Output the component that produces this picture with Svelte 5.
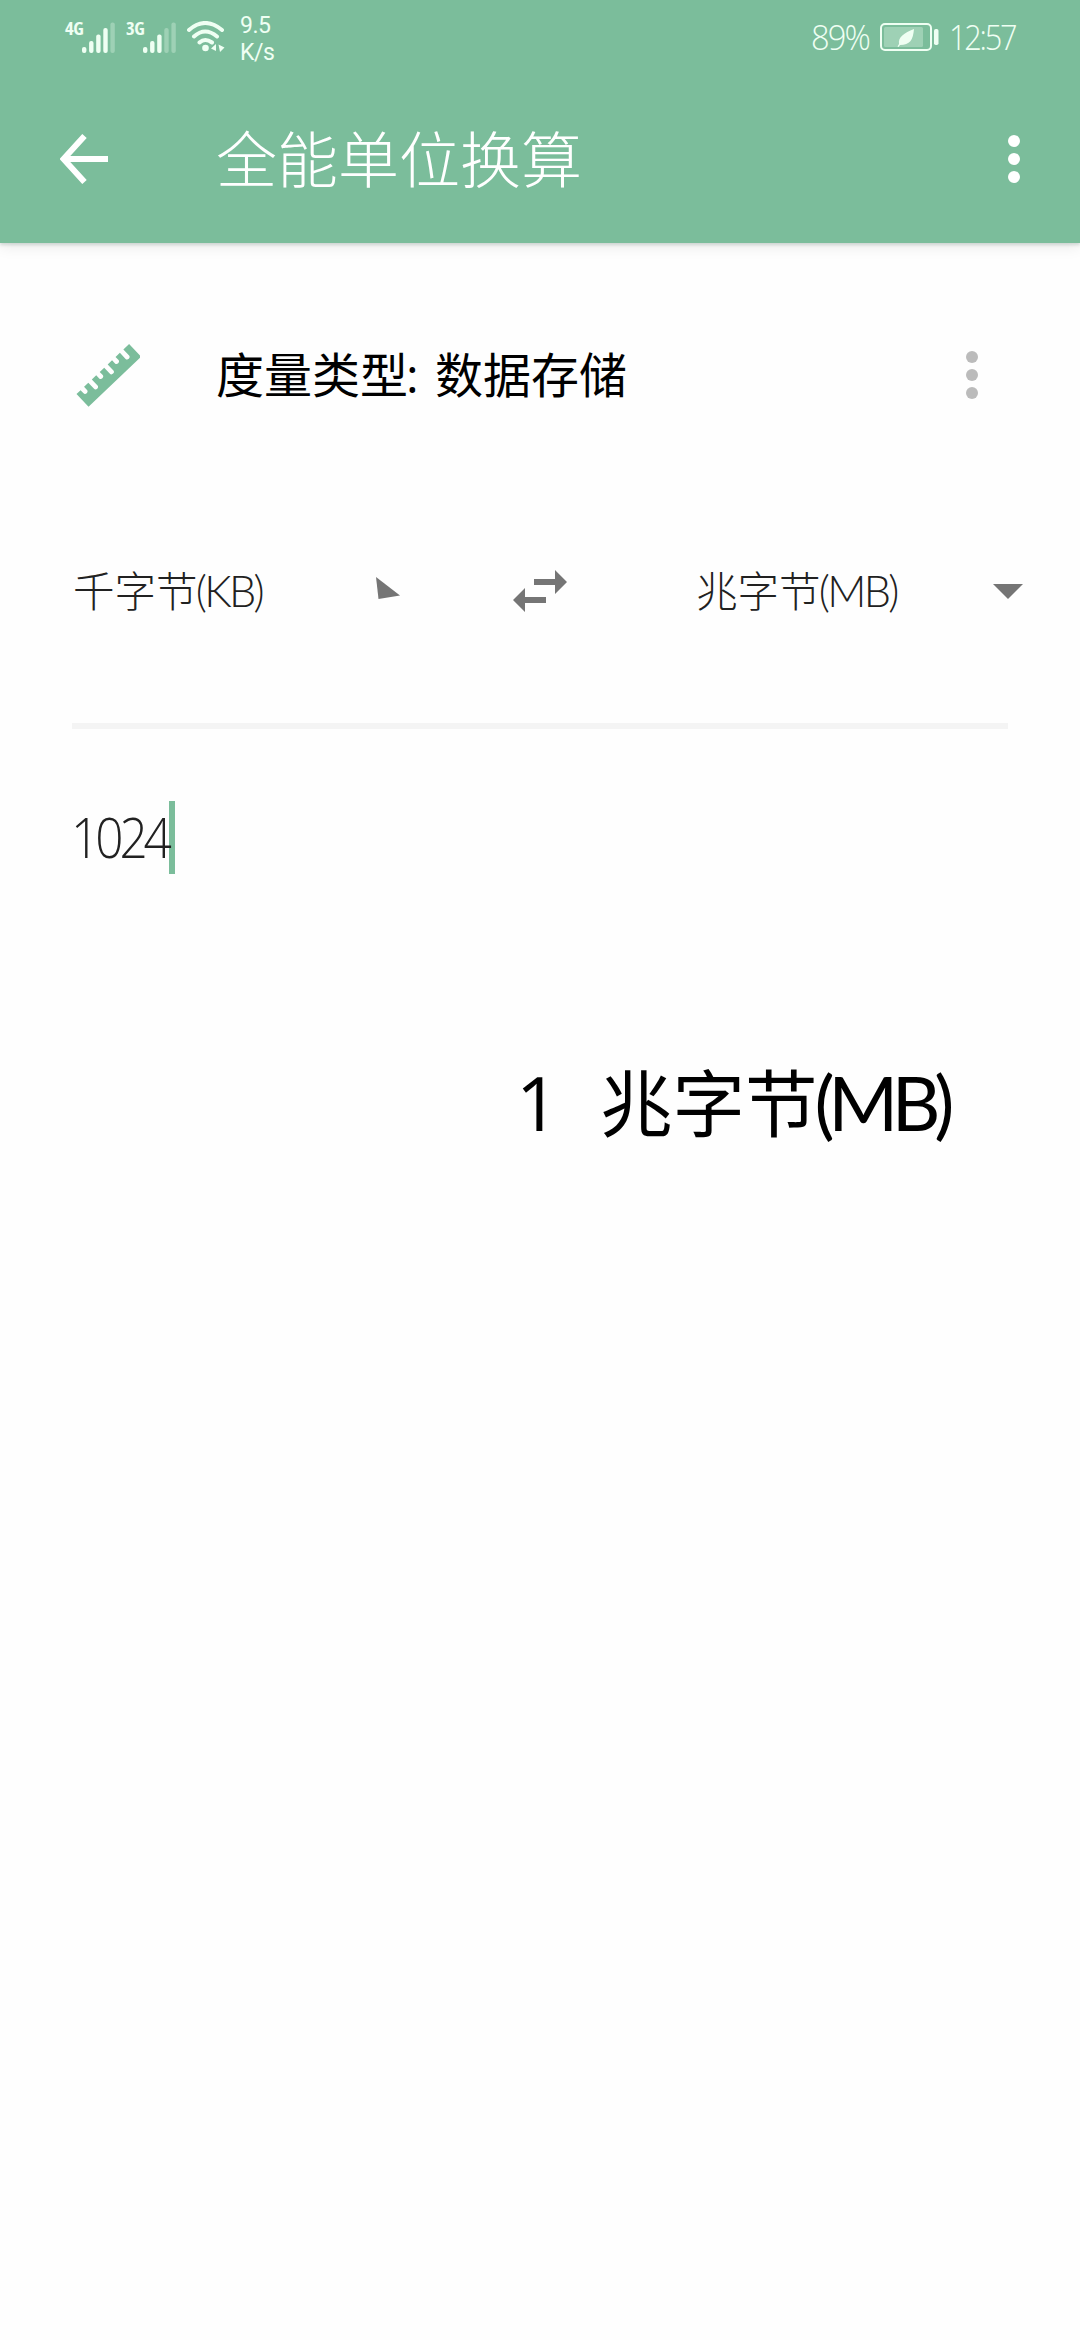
<script>
  let amount = $state('1024');
  const from = { name: '千字节', code: 'KB' };
  const to = { name: '兆字节', code: 'MB' };
  const result = $derived(Number(amount) / 1024);
  const signals = [
    { label: '4G', active: 4 },
    { label: '3G', active: 3 }
  ];
  // ruler outline: alternating short and long notches along the top edge
  const notches = [8, 18.7, 29.6, 40.6, 51.4, 62.2]
    .map((x, i) => `H${x - 2.4}V${i % 2 ? 8 : 4}a2.400 2.400 0 0 0 4.800 0V0`)
    .join('');
  const ruler = `M0 0${notches}H72.500V17.500H0Z`;
</script>

{#snippet dots()}
  <svg class="dots" viewBox="0 0 12 48" aria-hidden="true">
    <circle cx="6" cy="6" r="6" /><circle cx="6" cy="24" r="6" /><circle cx="6" cy="42" r="6" />
  </svg>
{/snippet}

<div class="screen">
  <header>
    <div class="status">
      <div class="left">
        {#each signals as s}
          <div class="signal">
            <span class="net">{s.label}</span>
            <svg class="bars" viewBox="0 0 33 31" aria-hidden="true">
              {#each [6, 12, 18.5, 25, 30.5] as h, i}
                <rect x={i * 7.1} y={31 - h} width="4.4" height={h} rx="2" class:off={i >= s.active} />
              {/each}
            </svg>
          </div>
        {/each}
        <svg class="wifi" viewBox="0 0 38 32" aria-hidden="true">
          <path d="M2 9Q18 -5 35 9M7 15.500Q18 5.500 30 15.500M12.500 21.500Q18 16.500 25 21.500" />
          <circle cx="18.500" cy="27" r="3.300" />
          <path class="fill" d="M24 27.500L29 23V30ZM31.500 23.500L37.500 26.500L33 31Z" />
        </svg>
        <div class="speed"><span>9.5</span><span>K/s</span></div>
      </div>
      <div class="right">
        <div class="pct"><span>89%</span></div>
        <svg class="battery" viewBox="0 0 59 28" aria-hidden="true">
          <rect class="shell" x="1" y="1" width="50" height="26" rx="4" />
          <rect class="charge" x="4" y="4" width="39" height="20" rx="1.500" />
          <path d="M34 6C33 17 30 22 20 22L18.500 24L17.500 23.500L19 21C18 14 24 10 34 6Z" />
          <rect x="54" y="6" width="4.500" height="16" rx="1.800" />
        </svg>
        <div class="clock"><span>12:57</span></div>
      </div>
    </div>
    <div class="bar">
      <svg class="back" viewBox="0 0 48 50" aria-hidden="true">
        <path d="M24.500 2L3.500 25L24.500 48M3.500 25H48" />
      </svg>
      <h1>全能单位换算</h1>
      {@render dots()}
    </div>
  </header>

  <main>
    <section class="kind">
      <svg class="ruler" viewBox="0 0 64 64" aria-hidden="true">
        <path transform="translate(.5 51) rotate(-43.500)" d={ruler} />
      </svg>
      <h2>度量类型<span class="colon">:</span>数据存储</h2>
      {@render dots()}
    </section>

    <section class="units">
      <div class="unit">{from.name}<span class="code">({from.code})</span></div>
      <svg class="caret-left" viewBox="0 0 24 22" aria-hidden="true"><path d="M0 0L24 18.500L2.500 22Z" /></svg>
      <svg class="swap" viewBox="0 0 54 42" aria-hidden="true">
        <path d="M42 0L54 12L42 24V15H21V9H42ZM12 18V27H33V33H12V42L0 30Z" />
      </svg>
      <div class="unit second">{to.name}<span class="code">({to.code})</span></div>
      <svg class="caret" viewBox="0 0 30 15" aria-hidden="true"><path d="M0 0H30L15 15Z" /></svg>
    </section>

    <div class="rule"></div>

    <div class="entry"><div class="value"><span>{amount}</span></div><div class="cursor"></div></div>

    <div class="result">
      <span class="number">{result}</span>
      <span class="name">{to.name}<span class="code">({to.code})</span></span>
    </div>
  </main>
</div>

<style>
  :global(body) { margin: 0; background: #fefefe; }
  .screen {
    width: 1080px; height: 2340px; overflow: hidden; background: #fefefe; color: #000;
    font-family: "Open Sans", "Noto Sans CJK SC", sans-serif;
  }
  svg { display: block; flex: none; fill: currentColor; }
  h1, h2 { margin: 0; white-space: nowrap; }
  header {
    height: 243px; color: #fff; background: #7bbd9b;
    box-shadow: 0 2px 3px rgba(60, 100, 80, .2), 0 4px 14px rgba(0, 0, 0, .08);
  }
  .status { height: 75px; display: flex; justify-content: space-between; color: #effff3; }
  .left, .right { display: flex; }
  .left { padding-left: 65px; }
  .signal { display: flex; width: 61px; }
  .net { width: 18px; padding-top: 18px; font-size: 18.5px; font-weight: 700; line-height: 20px; font-stretch: 75%; letter-spacing: -.5px; }
  .bars { width: 33px; height: 31px; margin: 22px 0 0 -1px; }
  .off { opacity: .3; }
  .wifi { width: 38px; height: 32px; margin: 21px 0 0; }
  .wifi path { fill: none; stroke: currentColor; stroke-width: 4; stroke-linecap: round; }
  .wifi .fill { fill: currentColor; stroke: none; }
  .speed { display: flex; flex-direction: column; margin: 12px 0 0 15px; font: 400 23px/27px Roboto, sans-serif; letter-spacing: -.5px; }
  .right { padding-right: 65px; align-items: flex-start; font-size: 35.500px; font-weight: 300; line-height: 40px; }
  .pct, .clock { margin-top: 16px; }
  .pct { width: 60px; letter-spacing: -2px; }
  .clock { width: 66px; letter-spacing: -2.600px; }
  .pct span, .clock span, .value span { display: inline-block; transform-origin: 0 50%; }
  .pct span { transform: scaleX(.92); }
  .clock span { transform: scaleX(.865); }
  .battery { width: 59px; height: 28px; margin: 23px 10px 0 9px; }
  .shell { fill: none; stroke: currentColor; stroke-width: 2; }
  .charge { opacity: .3; }
  .bar { display: flex; align-items: center; height: 168px; padding: 0 60px; }
  .back { width: 48px; height: 50px; margin-top: -1px; fill: none; stroke: currentColor; stroke-width: 6; }
  h1 { margin: 1px auto 0 108px; font-size: 61px; font-weight: 300; line-height: 80px; }
  .dots { width: 12px; height: 48px; }
  .kind { display: flex; align-items: center; height: 64px; padding: 100px 102px 0 76px; }
  .ruler { width: 64px; height: 64px; color: #7bbd9b; }
  h2 { margin: 0 auto 0 76px; font-size: 48px; font-weight: 400; line-height: 64px; }
  .colon { display: inline-block; width: 27px; text-indent: -2px; }
  .kind .dots { color: #bbb; }
  .units { display: flex; align-items: center; height: 80px; margin-top: 144px; padding-left: 73px; color: #757575; }
  .unit { width: 303px; margin-top: -2px; color: #212121; font-size: 41.500px; font-weight: 300; line-height: 56px; white-space: nowrap; }
  .code { font-family: Lato, sans-serif; font-size: 1.04em; letter-spacing: -.085em; margin-left: -.04em; }
  .unit .code { letter-spacing: -.062em; }
  .caret-left { width: 24px; height: 22px; margin-top: -6px; }
  .swap { width: 54px; height: 42px; margin-left: 113px; }
  .second { width: 297px; margin-left: 129px; }
  .caret { width: 30px; height: 15px; }
  .rule { height: 6px; margin: 92px 72px 0; background: #f4f4f4; }
  .entry { display: flex; height: 73px; margin-top: 72px; padding-left: 71px; color: #212121; font-size: 55px; font-weight: 300; line-height: 71px; }
  .value { width: 98px; letter-spacing: -4.500px; }
  .value span { transform: scaleX(.9); }
  .cursor { width: 6px; background: #7bbd9b; }
  .result { display: flex; align-items: baseline; height: 100px; margin-top: 178px; padding-left: 516px; font-size: 72.500px; font-weight: 400; line-height: 100px; white-space: nowrap; }
  .number { width: 84px; font-size: 75px; }
</style>
